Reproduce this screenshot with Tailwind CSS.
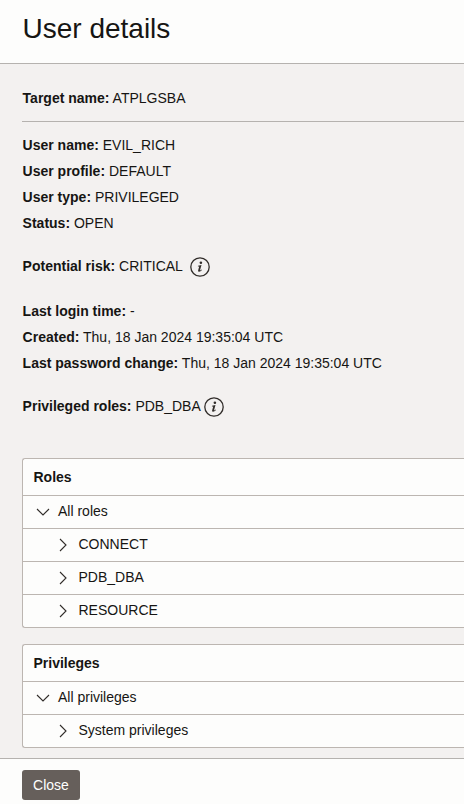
<!DOCTYPE html>
<html lang="en">
<head>
<meta charset="utf-8">
<title>User details</title>
<script src="https://cdn.jsdelivr.net/npm/@tailwindcss/browser@4"></script>
</head>
<body class="font-['Liberation_Sans',Arial,sans-serif]">
<svg class="hidden">
  <symbol id="info" viewBox="0 0 20 20"><circle cx="10" cy="10" r="9.2" fill="none" stroke="#312d2a" stroke-width="1.3"/><circle cx="10.9" cy="5.7" r="1.3" fill="#312d2a"/><path d="M8 8.8L11.5 8L10.1 13.1C10 13.7 10.4 13.6 11.5 12.5L11.9 12.9C10.5 14.9 8 15.3 8.1 13.4L9.2 9.4L7.9 9.5Z" fill="#312d2a"/></symbol>
  <symbol id="down" viewBox="0 0 14 8"><path d="M1 1L7 7L13 1" fill="none" stroke="#312d2a" stroke-width="1.1"/></symbol>
  <symbol id="right" viewBox="0 0 8 14"><path d="M1 1L7 7L1 13" fill="none" stroke="#312d2a" stroke-width="1.1"/></symbol>
</svg>
<div class="flex h-[804px] w-[464px] flex-col overflow-hidden bg-[#f3f1f0] text-sm text-[#161513]">
  <header class="flex h-16 shrink-0 items-center border-b border-[#b5b2af] bg-[#fdfdfc] pb-1.5 pl-[22.5px]">
    <h1 class="text-[28px] leading-9">User details</h1>
  </header>
  <main class="h-[694px] shrink-0 pl-[22px]">
    <div class="flex h-[58px] items-center border-b border-[#b5b2af] pt-2.5 pl-[0.6px]"><p><b>Target name:</b> ATPLGSBA</p></div>
    <div class="mt-[10px] pl-[0.6px] leading-[26px]">
      <p><b>User name:</b> EVIL_RICH</p>
      <p><b>User profile:</b> DEFAULT</p>
      <p><b>User type:</b> PRIVILEGED</p>
      <p><b>Status:</b> OPEN</p>
    </div>
    <div class="mt-[17px] flex h-[26px] items-center pl-[0.6px]"><p><b>Potential risk:</b> CRITICAL</p><svg class="mt-0.5 ml-[7.4px] size-5"><use href="#info"/></svg></div>
    <div class="mt-[19px] pl-[0.6px] leading-[26px]">
      <p><b>Last login time:</b> -</p>
      <p><b>Created:</b> Thu, 18 Jan 2024 19:35:04 UTC</p>
      <p><b>Last password change:</b> Thu, 18 Jan 2024 19:35:04 UTC</p>
    </div>
    <div class="mt-[17px] flex h-[26px] items-center pl-[0.6px]"><p><b>Privileged roles:</b> PDB_DBA</p><svg class="mt-0.5 ml-[3.4px] size-5"><use href="#info"/></svg></div>
    <section class="mt-[39px] divide-y divide-[#bcb6b1] rounded-l-[3px] border border-r-0 border-[#bcb6b1] bg-[#fdfdfc]">
      <h2 class="flex h-[37px] items-center pl-[10.5px] font-bold">Roles</h2>
      <div class="flex h-[33px] items-center pb-0.5 pl-[13px]"><svg class="mt-0.5 mr-2 h-2 w-3.5"><use href="#down"/></svg>All roles</div>
      <div class="flex h-[33px] items-center pb-0.5 pl-9"><svg class="mt-0.5 mr-[11.5px] h-3.5 w-2"><use href="#right"/></svg>CONNECT</div>
      <div class="flex h-[33px] items-center pb-0.5 pl-9"><svg class="mt-0.5 mr-[11.5px] h-3.5 w-2"><use href="#right"/></svg>PDB_DBA</div>
      <div class="flex h-8 items-center pb-0.5 pl-9"><svg class="mt-0.5 mr-[11.5px] h-3.5 w-2"><use href="#right"/></svg>RESOURCE</div>
    </section>
    <section class="mt-4 divide-y divide-[#bcb6b1] rounded-l-[3px] border border-r-0 border-[#bcb6b1] bg-[#fdfdfc]">
      <h2 class="flex h-[37px] items-center pl-[10.5px] font-bold">Privileges</h2>
      <div class="flex h-[33px] items-center pb-0.5 pl-[13px]"><svg class="mt-0.5 mr-2 h-2 w-3.5"><use href="#down"/></svg>All privileges</div>
      <div class="flex h-8 items-center pb-0.5 pl-9"><svg class="mt-0.5 mr-[11.5px] h-3.5 w-2"><use href="#right"/></svg>System privileges</div>
    </section>
  </main>
  <footer class="h-[46px] shrink-0 border-t border-[#b5b2af] bg-[#fdfdfc] pt-[11px] pl-[22px]">
    <button class="flex h-[30px] w-[58px] items-center justify-center rounded-[3px] bg-[#665f5b] text-white">Close</button>
  </footer>
</div>
</body>
</html>
